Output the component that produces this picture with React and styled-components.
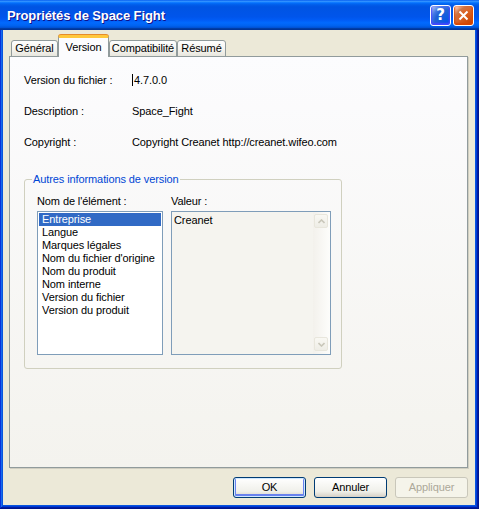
import React from "react";
import styled, { createGlobalStyle } from "styled-components";

const GlobalStyle = createGlobalStyle`
  html, body { margin: 0; padding: 0; background: #ffffff; }
  body { font-family: "Liberation Sans", Arial, sans-serif; font-size: 11px; letter-spacing: -0.1px; color: #000; }
  #root { width: 479px; height: 509px; }
  * { box-sizing: border-box; }
`;

const Window = styled.div`
  width: 479px;
  height: 509px;
  display: flex;
  flex-direction: column;
  background: #0855dd;
  box-shadow: inset -1px -1px #00138c, inset 1px 1px #0831d9, inset -2px -2px #001ea0,
    inset 2px 2px #166aee, inset -3px -3px #003bda, inset 3px 3px #0855dd;
`;

const TitleBar = styled.div`
  flex: none;
  height: 30px;
  display: flex;
  align-items: center;
  gap: 2px;
  padding: 0 5px 0 7px;
  background: linear-gradient(
    180deg,
    #0058ee 0%,
    #3593ff 4%,
    #288eff 6%,
    #127dff 8%,
    #036ffc 10%,
    #0262ee 14%,
    #0057e5 20%,
    #0054e3 24%,
    #0055eb 56%,
    #005bf5 66%,
    #026afe 76%,
    #0062ef 86%,
    #0052d6 92%,
    #0040ab 94%,
    #003092 100%
  );
`;

const Title = styled.div`
  flex: 1;
  color: #fff;
  font-family: "Liberation Sans", Arial, sans-serif;
  font-weight: bold;
  font-size: 13px;
  letter-spacing: -0.1px;
  text-shadow: 1px 1px #0f1089;
  white-space: nowrap;
  padding-top: 1px;
`;

const CaptionButton = styled.div`
  width: 21px;
  height: 21px;
  border: 1px solid #fff;
  border-radius: 3px;
  display: flex;
  align-items: center;
  justify-content: center;
  color: #fff;
  font-family: "DejaVu Sans", sans-serif;
  font-weight: bold;
  font-size: 15px;
  background: ${(p) =>
    p.$close
      ? "radial-gradient(circle at 90% 90%, #cc4600 0%, #dc6527 55%, #cd7546 70%, #ffccb2 90%, #fff 100%)"
      : "radial-gradient(circle at 90% 90%, #0054e9 0%, #2263d5 55%, #4479e4 70%, #a3bbec 90%, #fff 100%)"};
  box-shadow: ${(p) =>
    p.$close ? "inset 0 -1px 2px 1px #da4600" : "inset 0 -1px 2px 1px #4646ff"};
`;

const Body = styled.div`
  flex: 1;
  margin: 0 4px 4px 3px;
  background: #ece9d8;
  display: flex;
  flex-direction: column;
  padding: 5px 7px 7px 6px;
`;

const TabRow = styled.div`
  flex: none;
  height: 22px;
  display: flex;
  align-items: flex-end;
  padding-left: 2px;
  position: relative;
  z-index: 1;
`;

const Tab = styled.div`
  width: ${(p) => p.$w}px;
  height: ${(p) => (p.$active ? 22 : 17)}px;
  border: 1px solid #919b9c;
  border-bottom: ${(p) => (p.$active ? "none" : "1px solid #919b9c")};
  border-radius: 3px 3px 0 0;
  display: flex;
  align-items: ${(p) => (p.$active ? "flex-start" : "center")};
  justify-content: center;
  padding-top: ${(p) => (p.$active ? "3px" : "0")};
  line-height: 13px;
  white-space: nowrap;
  background: ${(p) =>
    p.$active ? "#fcfcfe" : "linear-gradient(180deg, #fefefe 0%, #f4f3ee 60%, #e8e6dd 100%)"};
  ${(p) =>
    p.$active
      ? `border-top: 3px solid #ffc83c; box-shadow: 0 -1px 0 #e68b2c;`
      : ""}
`;

const Panel = styled.div`
  flex: none;
  height: 412px;
  margin-top: -1px;
  border: 1px solid #919b9c;
  box-shadow: 1px 1px 0 #d0cec1;
  background: linear-gradient(180deg, #fcfcfe 0%, #f4f3ee 100%);
  display: flex;
  flex-direction: column;
`;

const InfoGrid = styled.div`
  display: grid;
  grid-template-columns: 108px auto;
  row-gap: 18px;
  padding: 17px 0 0 14px;
  line-height: 13px;
`;

const Caret = styled.span`
  border-left: 1px solid #000;
  padding-left: 1px;
`;

const Group = styled.fieldset`
  margin: 24px 0 0 14px;
  width: 318px;
  border: 1px solid #d0d0bf;
  border-radius: 3px;
  padding: 9px 10px 13px 12px;
  min-width: 0;
`;

const Legend = styled.legend`
  color: #0046d5;
  line-height: 13px;
  padding: 0 1px;
  margin-left: -5px;
`;

const GroupGrid = styled.div`
  display: grid;
  grid-template-columns: 126px 160px;
  grid-template-rows: 13px 144px;
  column-gap: 8px;
  row-gap: 3px;
  line-height: 13px;
`;

const ListBox = styled.div`
  border: 1px solid #7f9db9;
  background: #fff;
  padding: 1px;
`;

const ListItem = styled.div`
  height: 13px;
  line-height: 13px;
  padding-left: 3px;
  white-space: nowrap;
  background: ${(p) => (p.$selected ? "#316ac5" : "transparent")};
  color: ${(p) => (p.$selected ? "#fff" : "#000")};
`;

const ValueBox = styled.div`
  border: 1px solid #7f9db9;
  background: #f5f4ef;
  display: flex;
`;

const ValueText = styled.div`
  flex: 1;
  padding: 2px 2px;
`;

const ScrollBar = styled.div`
  flex: none;
  width: 17px;
  display: flex;
  flex-direction: column;
  justify-content: space-between;
  padding: 2px 2px 3px 1px;
  background: linear-gradient(90deg, #f3f1ec 0%, #fdfdfb 100%);
`;

const ArrowButton = styled.div`
  width: 14px;
  height: 14px;
  border: 1px solid #e8e6dc;
  border-radius: 2px;
  background: linear-gradient(180deg, #f9f8f3 0%, #eeede6 100%);
  display: flex;
  align-items: center;
  justify-content: center;
`;

const ButtonRow = styled.div`
  flex: none;
  margin-top: 9px;
  display: flex;
  justify-content: flex-end;
  gap: 8px;
`;

const Button = styled.div`
  width: 73px;
  height: 21px;
  border: 1px solid ${(p) => (p.$disabled ? "#c9c7ba" : "#003c74")};
  border-radius: 3px;
  display: flex;
  align-items: center;
  justify-content: center;
  line-height: 13px;
  color: ${(p) => (p.$disabled ? "#aca899" : "#000")};
  background: ${(p) =>
    p.$disabled ? "#f5f4ea" : "linear-gradient(180deg, #ffffff 0%, #f0f0ea 70%, #d6d0c5 100%)"};
  box-shadow: ${(p) =>
    p.$default ? "inset 0 0 0 1px #cee7ff, inset 0 -1px 0 2px #6982ee" : "none"};
`;

const Chevron = ({ up }) => (
  <svg width="7" height="5" viewBox="0 0 7 5">
    <path
      d={up ? "M0.5 4 L3.5 1 L6.5 4" : "M0.5 1 L3.5 4 L6.5 1"}
      fill="none"
      stroke="#c9c7ba"
      strokeWidth="1.6"
    />
  </svg>
);

const CloseGlyph = () => (
  <svg width="11" height="11" viewBox="0 0 11 11">
    <path d="M1.5 1.5 L9.5 9.5 M9.5 1.5 L1.5 9.5" stroke="#fff" strokeWidth="2" />
  </svg>
);

const items = [
  "Entreprise",
  "Langue",
  "Marques légales",
  "Nom du fichier d'origine",
  "Nom du produit",
  "Nom interne",
  "Version du fichier",
  "Version du produit",
];

const tabs = [
  { label: "Général", w: 47 },
  { label: "Version", w: 51, active: true },
  { label: "Compatibilité", w: 68 },
  { label: "Résumé", w: 49 },
];

export default function App() {
  return (
    <>
      <GlobalStyle />
      <Window>
        <TitleBar>
          <Title>Propriétés de Space Fight</Title>
          <CaptionButton>?</CaptionButton>
          <CaptionButton $close>
            <CloseGlyph />
          </CaptionButton>
        </TitleBar>
        <Body>
          <TabRow>
            {tabs.map((t) => (
              <Tab key={t.label} $w={t.w} $active={t.active}>
                {t.label}
              </Tab>
            ))}
          </TabRow>
          <Panel>
            <InfoGrid>
              <span>Version du fichier :</span>
              <span>
                <Caret />4.7.0.0
              </span>
              <span>Description :</span>
              <span>Space_Fight</span>
              <span>Copyright :</span>
              <span>Copyright Creanet http://creanet.wifeo.com</span>
            </InfoGrid>
            <Group>
              <Legend>Autres informations de version</Legend>
              <GroupGrid>
                <span>Nom de l'élément :</span>
                <span>Valeur :</span>
                <ListBox>
                  {items.map((it, i) => (
                    <ListItem key={it} $selected={i === 0}>
                      {it}
                    </ListItem>
                  ))}
                </ListBox>
                <ValueBox>
                  <ValueText>Creanet</ValueText>
                  <ScrollBar>
                    <ArrowButton>
                      <Chevron up />
                    </ArrowButton>
                    <ArrowButton>
                      <Chevron />
                    </ArrowButton>
                  </ScrollBar>
                </ValueBox>
              </GroupGrid>
            </Group>
          </Panel>
          <ButtonRow>
            <Button $default>OK</Button>
            <Button>Annuler</Button>
            <Button $disabled>Appliquer</Button>
          </ButtonRow>
        </Body>
      </Window>
    </>
  );
}
